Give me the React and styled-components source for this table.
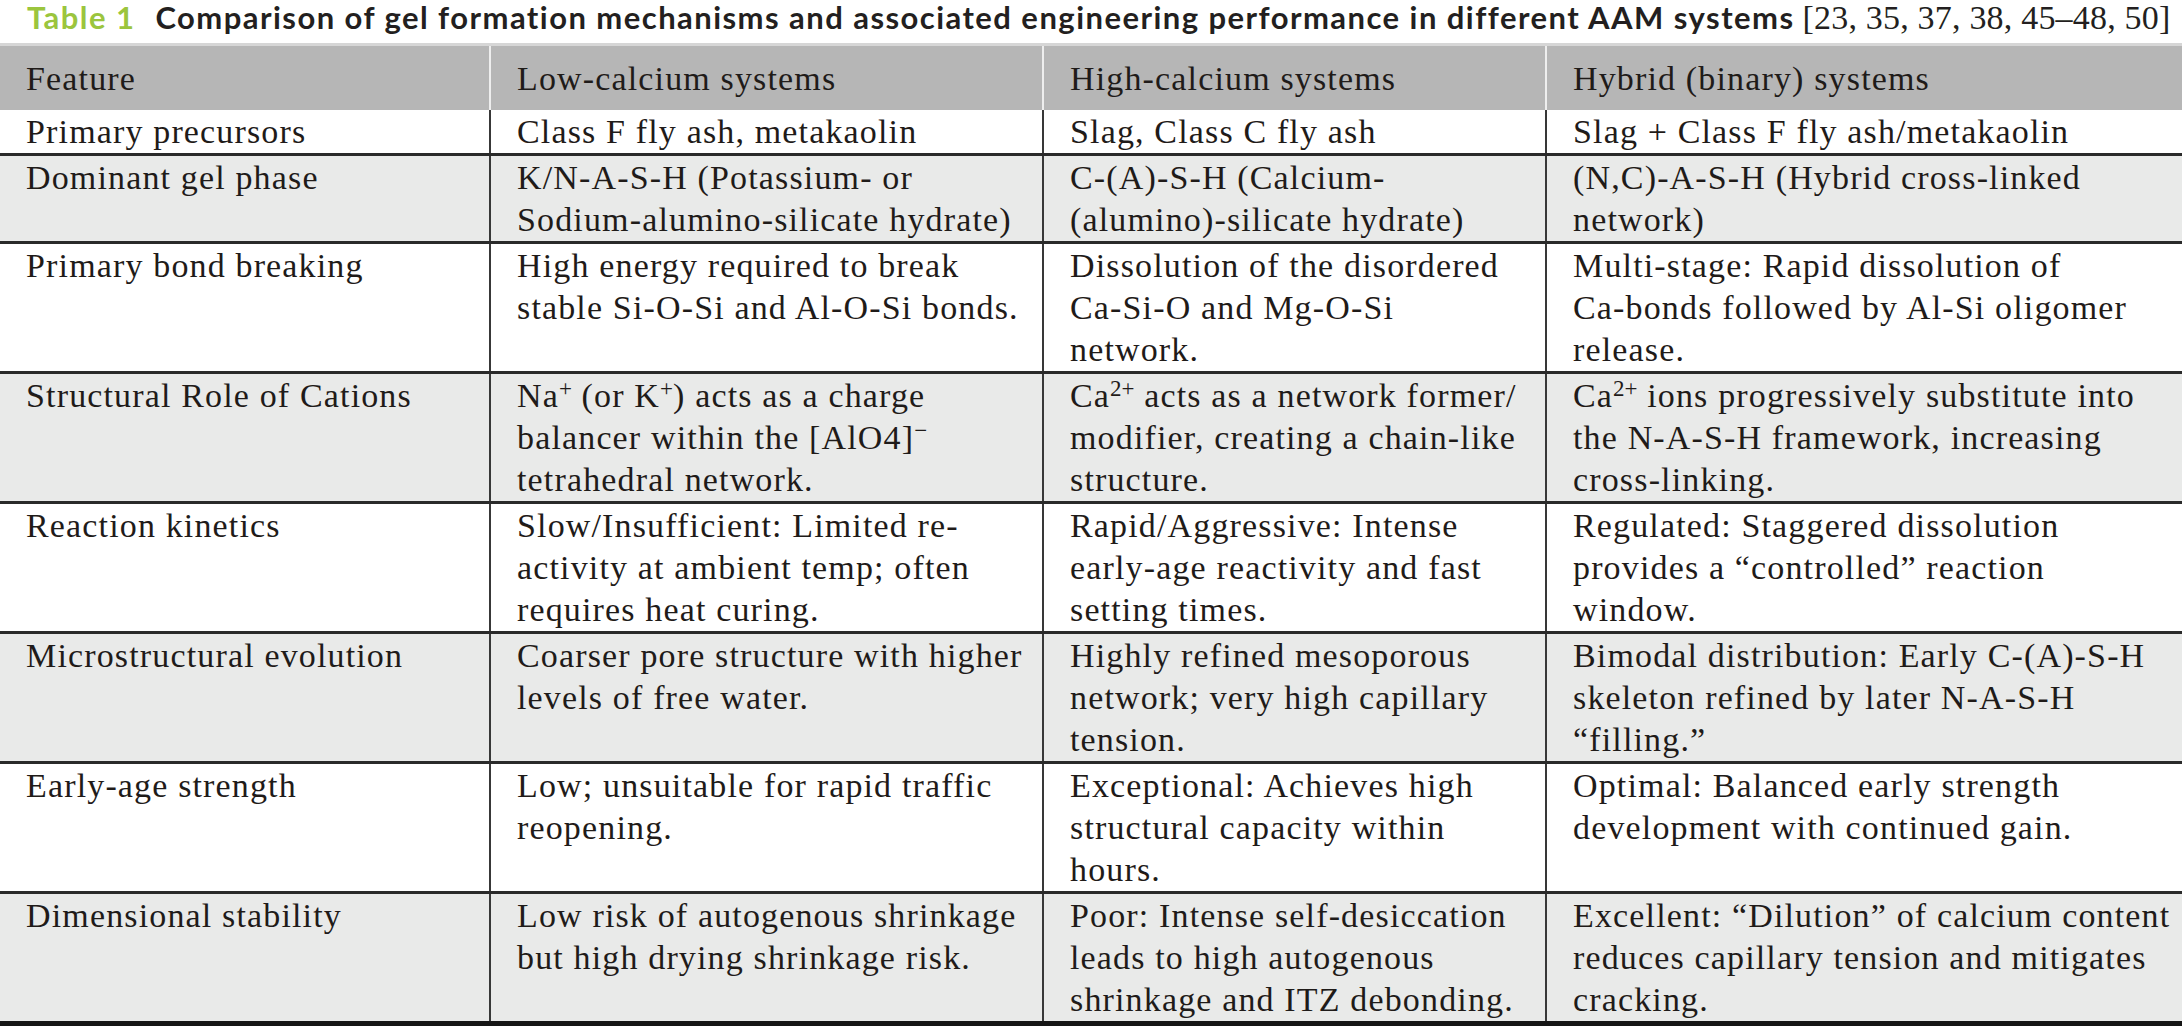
import React from "react";
import styled, { createGlobalStyle } from "styled-components";

const GlobalStyle = createGlobalStyle`
  html, body { margin: 0; padding: 0; background: #ffffff; }
  body { width: 2182px; overflow: hidden; }
`;

const Page = styled.div`
  width: 2182px;
  background: #ffffff;
`;

const Caption = styled.div`
  display: flex;
  align-items: baseline;
  height: 43px;
  box-sizing: border-box;
  padding-left: 27px;
  font-family: Lato, "Open Sans", sans-serif;
  font-weight: 700;
  font-size: 31px;
  letter-spacing: 1.45px;
  line-height: 34px;
  color: #231f20;
  white-space: nowrap;
`;

const Label = styled.span`
  color: #9bc53d;
  margin-right: 20px;
`;

const Refs = styled.span`
  font-family: "Liberation Serif", "Times New Roman", serif;
  font-weight: 400;
  font-size: 34px;
  letter-spacing: 0.2px;
  margin-left: 8px;
`;

const Table = styled.table`
  width: 2182px;
  border-collapse: collapse;
  table-layout: fixed;
  font-family: "Liberation Serif", "Times New Roman", serif;
  font-size: 34px;
  letter-spacing: 1.15px;
  color: #1f1b19;
`;

const HeadRow = styled.tr`
  background: #b6b6b6;
  border-top: 3px solid #d6d6d6;
`;

const HeadCell = styled.th`
  height: 65px;
  box-sizing: border-box;
  padding: 2px 20px 0 26px;
  text-align: left;
  font-weight: 400;
  line-height: 42.5px;
  vertical-align: middle;
  white-space: nowrap;
  border-left: 2px solid #eeeeee;
  &:first-child { border-left: none; }
`;

const Row = styled.tr`
  background: ${(p) => (p.$shade ? "#e9eae9" : "#ffffff")};
  border-bottom: ${(p) => (p.$last ? "5px solid #151515" : "3px solid #2a2a2a")};
`;

const Cell = styled.td`
  padding: 1px 14px 0 26px;
  vertical-align: top;
  line-height: 42px;
  white-space: nowrap;
  border-left: 2px solid #383838;
  &:first-child { border-left: none; }
`;

const Sup = styled.sup`
  font-size: 23px;
  line-height: 0;
  vertical-align: 11px;
  letter-spacing: 0;
`;

const Lines = ({ items }) =>
  items.map((line, i) => (
    <React.Fragment key={i}>
      {i > 0 && <br />}
      {line}
    </React.Fragment>
  ));

const rows = [
  [
    ["Primary precursors"],
    ["Class F fly ash, metakaolin"],
    ["Slag, Class C fly ash"],
    ["Slag + Class F fly ash/metakaolin"],
  ],
  [
    ["Dominant gel phase"],
    ["K/N-A-S-H (Potassium- or", "Sodium-alumino-silicate hydrate)"],
    ["C-(A)-S-H (Calcium-", "(alumino)-silicate hydrate)"],
    ["(N,C)-A-S-H (Hybrid cross-linked", "network)"],
  ],
  [
    ["Primary bond breaking"],
    ["High energy required to break", "stable Si-O-Si and Al-O-Si bonds."],
    ["Dissolution of the disordered", "Ca-Si-O and Mg-O-Si", "network."],
    ["Multi-stage: Rapid dissolution of", "Ca-bonds followed by Al-Si oligomer", "release."],
  ],
  [
    ["Structural Role of Cations"],
    [
      <>Na<Sup>+</Sup> (or K<Sup>+</Sup>) acts as a charge</>,
      <>balancer within the [AlO4]<Sup>−</Sup></>,
      "tetrahedral network.",
    ],
    [
      <>Ca<Sup>2+</Sup> acts as a network former/</>,
      "modifier, creating a chain-like",
      "structure.",
    ],
    [
      <>Ca<Sup>2+</Sup> ions progressively substitute into</>,
      "the N-A-S-H framework, increasing",
      "cross-linking.",
    ],
  ],
  [
    ["Reaction kinetics"],
    ["Slow/Insufficient: Limited re-", "activity at ambient temp; often", "requires heat curing."],
    ["Rapid/Aggressive: Intense", "early-age reactivity and fast", "setting times."],
    ["Regulated: Staggered dissolution", "provides a \u201Ccontrolled\u201D reaction", "window."],
  ],
  [
    ["Microstructural evolution"],
    ["Coarser pore structure with higher", "levels of free water."],
    ["Highly refined mesoporous", "network; very high capillary", "tension."],
    ["Bimodal distribution: Early C-(A)-S-H", "skeleton refined by later N-A-S-H", "\u201Cfilling.\u201D"],
  ],
  [
    ["Early-age strength"],
    ["Low; unsuitable for rapid traffic", "reopening."],
    ["Exceptional: Achieves high", "structural capacity within", "hours."],
    ["Optimal: Balanced early strength", "development with continued gain."],
  ],
  [
    ["Dimensional stability"],
    ["Low risk of autogenous shrinkage", "but high drying shrinkage risk."],
    ["Poor: Intense self-desiccation", "leads to high autogenous", "shrinkage and ITZ debonding."],
    ["Excellent: \u201CDilution\u201D of calcium content", "reduces capillary tension and mitigates", "cracking."],
  ],
];

const headers = ["Feature", "Low-calcium systems", "High-calcium systems", "Hybrid (binary) systems"];

export default function App() {
  return (
    <Page>
      <GlobalStyle />
      <Caption>
        <Label>Table 1</Label>
        Comparison of gel formation mechanisms and associated engineering performance in different AAM systems
        <Refs>[23, 35, 37, 38, 45–48, 50]</Refs>
      </Caption>
      <Table>
        <colgroup>
          <col style={{ width: "490px" }} />
          <col style={{ width: "553px" }} />
          <col style={{ width: "503px" }} />
          <col style={{ width: "636px" }} />
        </colgroup>
        <thead>
          <HeadRow>
            {headers.map((h) => (
              <HeadCell key={h}>{h}</HeadCell>
            ))}
          </HeadRow>
        </thead>
        <tbody>
          {rows.map((r, i) => (
            <Row key={i} $shade={i % 2 === 1} $last={i === rows.length - 1}>
              {r.map((c, j) => (
                <Cell key={j}>
                  <Lines items={c} />
                </Cell>
              ))}
            </Row>
          ))}
        </tbody>
      </Table>
    </Page>
  );
}
